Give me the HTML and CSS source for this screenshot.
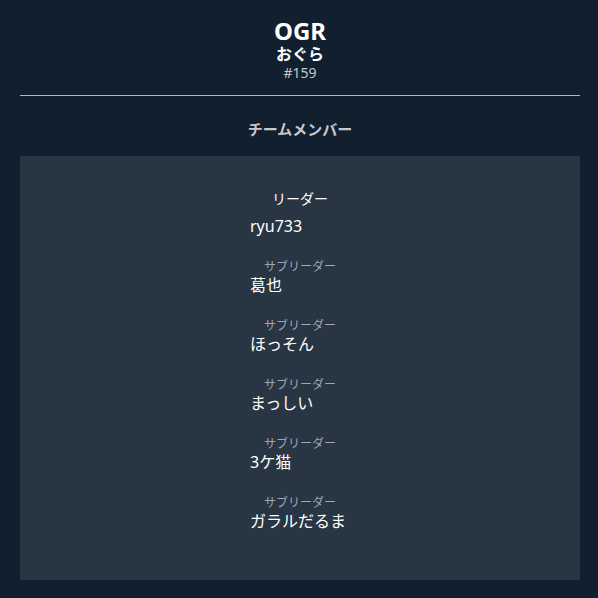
FILE: index.html
```html
<!DOCTYPE html>
<html lang="ja">
<head>
<meta charset="utf-8">
<link rel="stylesheet" href="styles.css">
</head>
<body>
<div class="page">
  <header class="head">
    <div class="tag">OGR</div>
    <div class="name">おぐら</div>
    <div class="num">#159</div>
  </header>
  <hr class="rule">
  <h2 class="sec">チームメンバー</h2>
  <section class="panel">
    <ul class="members">
      <li class="member"><div class="role lead">リーダー</div><div class="who">ryu733</div></li>
      <li class="member"><div class="role">サブリーダー</div><div class="who">葛也</div></li>
      <li class="member"><div class="role">サブリーダー</div><div class="who">ほっそん</div></li>
      <li class="member"><div class="role">サブリーダー</div><div class="who">まっしい</div></li>
      <li class="member"><div class="role">サブリーダー</div><div class="who">3ケ猫</div></li>
      <li class="member"><div class="role">サブリーダー</div><div class="who">ガラルだるま</div></li>
    </ul>
  </section>
</div>
</body>
</html>
```
FILE: styles.css
```css
html, body {
  margin: 0;
  padding: 0;
  background: #111f2e;
  color: #ffffff;
  font-family: "Noto Sans", "Noto Sans CJK JP", sans-serif;
}
.page {
  padding: 17px 18px 18px 20px;
  width: 560px;
}
.head {
  text-align: center;
}
.tag {
  font-size: 24px;
  font-weight: 700;
  line-height: 28px;
}
.name {
  font-size: 16px;
  font-weight: 700;
  line-height: 19px;
}
.num {
  font-size: 14px;
  line-height: 18px;
  color: #c4c8cc;
}
.rule {
  border: 0;
  border-top: 1px solid #b5b9bd;
  margin: 13px 0 0;
}
.sec {
  margin: 0;
  padding: 23px 0 0;
  text-align: center;
  font-size: 15px;
  line-height: 20px;
  font-weight: 700;
  color: #c4c9ce;
}
.panel {
  margin-top: 17px;
  background: #283643;
  height: 424px;
  box-sizing: border-box;
  padding-top: 34px;
}
.members {
  list-style: none;
  margin: 0 auto;
  padding: 0;
  width: 100px;
  display: flex;
  flex-direction: column;
  gap: 22px;
}
.member {
  display: flex;
  flex-direction: column;
}
.role {
  text-align: center;
  font-size: 12px;
  line-height: 16px;
  color: #a0a7af;
  white-space: nowrap;
}
.role.lead {
  font-size: 14px;
  line-height: 18px;
  color: #ffffff;
  margin-bottom: 8px;
}
.who {
  font-size: 16px;
  line-height: 21px;
  white-space: nowrap;
}
```
